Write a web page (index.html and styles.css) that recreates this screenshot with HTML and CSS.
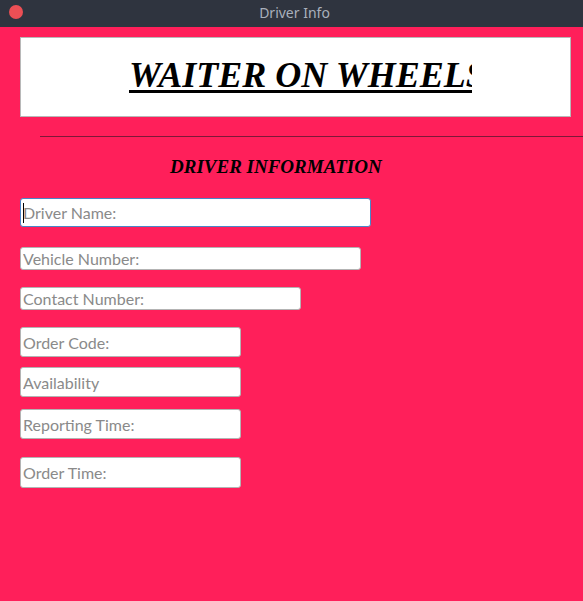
FILE: index.html
```html
<!DOCTYPE html>
<html>
<head>
<meta charset="utf-8">
<link rel="stylesheet" href="styles.css">
</head>
<body>
<div class="titlebar">
  <span class="close-dot"></span>
  <span class="title">Driver Info</span>
</div>
<main class="window">
  <div class="banner">
    <div class="banner-clip"><span class="banner-text">WAITER ON WHEELS</span></div>
  </div>
  <hr class="divider">
  <h2 class="section-title">DRIVER INFORMATION</h2>
  <form class="form">
    <div class="field-wrap f1">
      <input class="field focused" type="text" placeholder="Driver Name:">
      <span class="caret"></span>
    </div>
    <input class="field f2" type="text" placeholder="Vehicle Number:">
    <input class="field f3" type="text" placeholder="Contact Number:">
    <input class="field f4" type="text" placeholder="Order Code:">
    <input class="field f5" type="text" placeholder="Availability">
    <input class="field f6" type="text" placeholder="Reporting Time:">
    <input class="field f7" type="text" placeholder="Order Time:">
  </form>
</main>
</body>
</html>
```
FILE: styles.css
```css
html, body {
  margin: 0;
  padding: 0;
  height: 100%;
}
body {
  background: #ff1f5a;
  font-family: "Noto Sans", "DejaVu Sans", sans-serif;
  overflow: hidden;
}
.titlebar {
  height: 27px;
  background: #2f343f;
  position: relative;
  display: flex;
  align-items: center;
  justify-content: center;
}
.close-dot {
  position: absolute;
  left: 9px;
  top: 5px;
  width: 14px;
  height: 14px;
  border-radius: 50%;
  background: #ec4f55;
}
.title {
  color: #a9b0bc;
  font-size: 14px;
  margin-left: 6px;
  margin-top: -2px;
}
.window {
  display: flex;
  flex-direction: column;
}
.banner {
  margin: 10px 0 0 20px;
  width: 549px;
  height: 78px;
  background: #ffffff;
  border: 1px solid #b8b8b8;
  display: flex;
  align-items: center;
}
.banner-clip {
  margin-left: 108px;
  width: 343px;
  overflow: hidden;
  white-space: nowrap;
  padding-bottom: 4px;
}
.banner-text {
  font-family: "Liberation Serif", "Times New Roman", serif;
  font-weight: bold;
  font-style: italic;
  font-size: 36px;
  line-height: 40px;
  color: #000;
  text-decoration: underline;
  text-decoration-thickness: 3px;
  text-underline-offset: 3px;
}
.divider {
  margin: 19px 0 0 40px;
  border: none;
  height: 1px;
  background: #7d1838;
}
.section-title {
  margin: 19px 0 0 170px;
  font-family: "Liberation Serif", "Times New Roman", serif;
  font-weight: bold;
  font-style: italic;
  font-size: 19px;
  line-height: 22px;
  color: #000;
}
.form {
  display: flex;
  flex-direction: column;
  align-items: flex-start;
  padding-left: 20px;
}
.field {
  box-sizing: border-box;
  margin: 0;
  border: 1px solid #b3b3b3;
  border-radius: 3px;
  background: #ffffff;
  padding: 0 2px;
  font-family: Lato, "Noto Sans", sans-serif;
  font-size: 16px;
  color: #333;
  outline: none;
}
.field::placeholder {
  color: #8a8a8a;
  opacity: 1;
}
.field-wrap {
  position: relative;
  display: flex;
}
.field.focused {
  width: 351px;
  height: 29px;
  border-color: #4a86c8;
}
.caret {
  position: absolute;
  left: 3px;
  top: 5px;
  width: 1px;
  height: 20px;
  background: #000;
}
.f1 { margin-top: 20px; }
.f2 { margin-top: 20px; width: 341px; height: 23px; }
.f3 { margin-top: 17px; width: 281px; height: 23px; }
.f4 { margin-top: 17px; width: 221px; height: 30px; }
.f5 { margin-top: 10px; width: 221px; height: 30px; }
.f6 { margin-top: 12px; width: 221px; height: 30px; }
.f7 { margin-top: 18px; width: 221px; height: 31px; }
```
